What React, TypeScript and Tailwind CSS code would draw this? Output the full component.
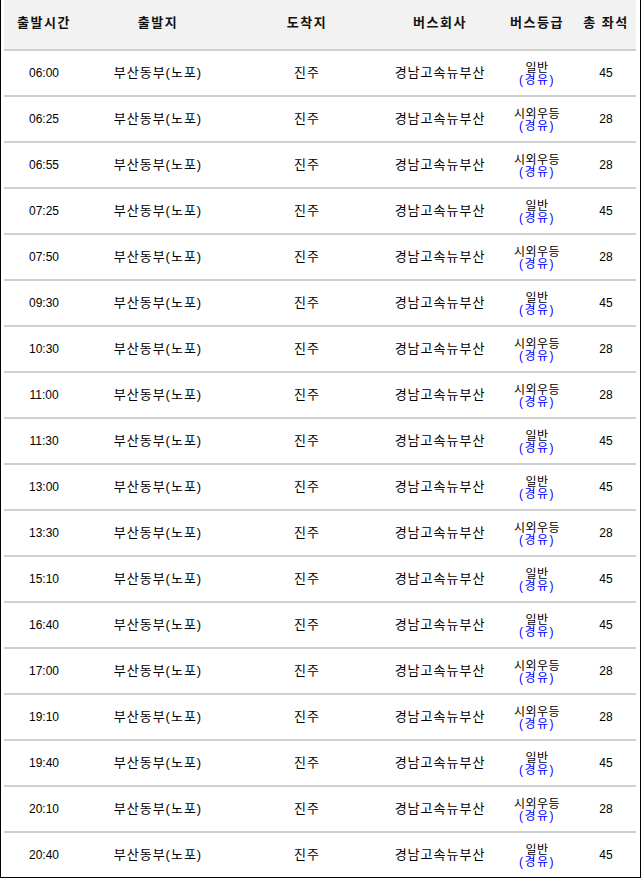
import React from 'react';

type Row = { time: string; grade: '일반' | '시외우등'; seats: number };

const rows: Row[] = [
  { time: '06:00', grade: '일반', seats: 45 },
  { time: '06:25', grade: '시외우등', seats: 28 },
  { time: '06:55', grade: '시외우등', seats: 28 },
  { time: '07:25', grade: '일반', seats: 45 },
  { time: '07:50', grade: '시외우등', seats: 28 },
  { time: '09:30', grade: '일반', seats: 45 },
  { time: '10:30', grade: '시외우등', seats: 28 },
  { time: '11:00', grade: '시외우등', seats: 28 },
  { time: '11:30', grade: '일반', seats: 45 },
  { time: '13:00', grade: '일반', seats: 45 },
  { time: '13:30', grade: '시외우등', seats: 28 },
  { time: '15:10', grade: '일반', seats: 45 },
  { time: '16:40', grade: '일반', seats: 45 },
  { time: '17:00', grade: '시외우등', seats: 28 },
  { time: '19:10', grade: '시외우등', seats: 28 },
  { time: '19:40', grade: '일반', seats: 45 },
  { time: '20:10', grade: '시외우등', seats: 28 },
  { time: '20:40', grade: '일반', seats: 45 },
];

const headers = ['출발시간', '출발지', '도착지', '버스회사', '버스등급', '총 좌석'];

const cols = 'grid grid-cols-[80px_148px_150px_116px_78px_60px]';

export default function App() {
  return (
    <div className="min-h-screen bg-white font-['Liberation_Sans','Noto_Sans_CJK_KR',sans-serif] text-black">
      <div className="w-[641px] border-x border-b border-black pl-[3px] pr-[4px]">
        {/* Header */}
        <div className={`${cols} h-[51px] bg-[#f2f2f2] border-b-2 border-[#d0d0d0]`}>
          {headers.map((h) => (
            <div
              key={h}
              className="flex items-center justify-center pb-[4px] text-[13px] font-bold tracking-[1.5px] text-[#111]"
            >
              {h}
            </div>
          ))}
        </div>

        {/* Body */}
        {rows.map((r, i) => (
          <div
            key={r.time}
            className={`${cols} text-[12px] ${
              i === rows.length - 1 ? 'h-[44px]' : 'h-[46px] border-b-2 border-[#d0d0d0]'
            }`}
          >
            <div className="flex items-center justify-center">{r.time}</div>
            <div className="flex items-center justify-center text-[13px] tracking-[1px]">부산동부(노포)</div>
            <div className="flex items-center justify-center text-[13px] tracking-[1px]">진주</div>
            <div className="flex items-center justify-center text-[13px] tracking-[1px]">경남고속뉴부산</div>
            <div className="flex flex-col items-center justify-center text-[12px] leading-[12px] tracking-[0.5px] pt-[1px]">
              <span>{r.grade}</span>
              <span className="text-[#0000ff] tracking-[1.5px]">(경유)</span>
            </div>
            <div className="flex items-center justify-center">{r.seats}</div>
          </div>
        ))}
      </div>
    </div>
  );
}
